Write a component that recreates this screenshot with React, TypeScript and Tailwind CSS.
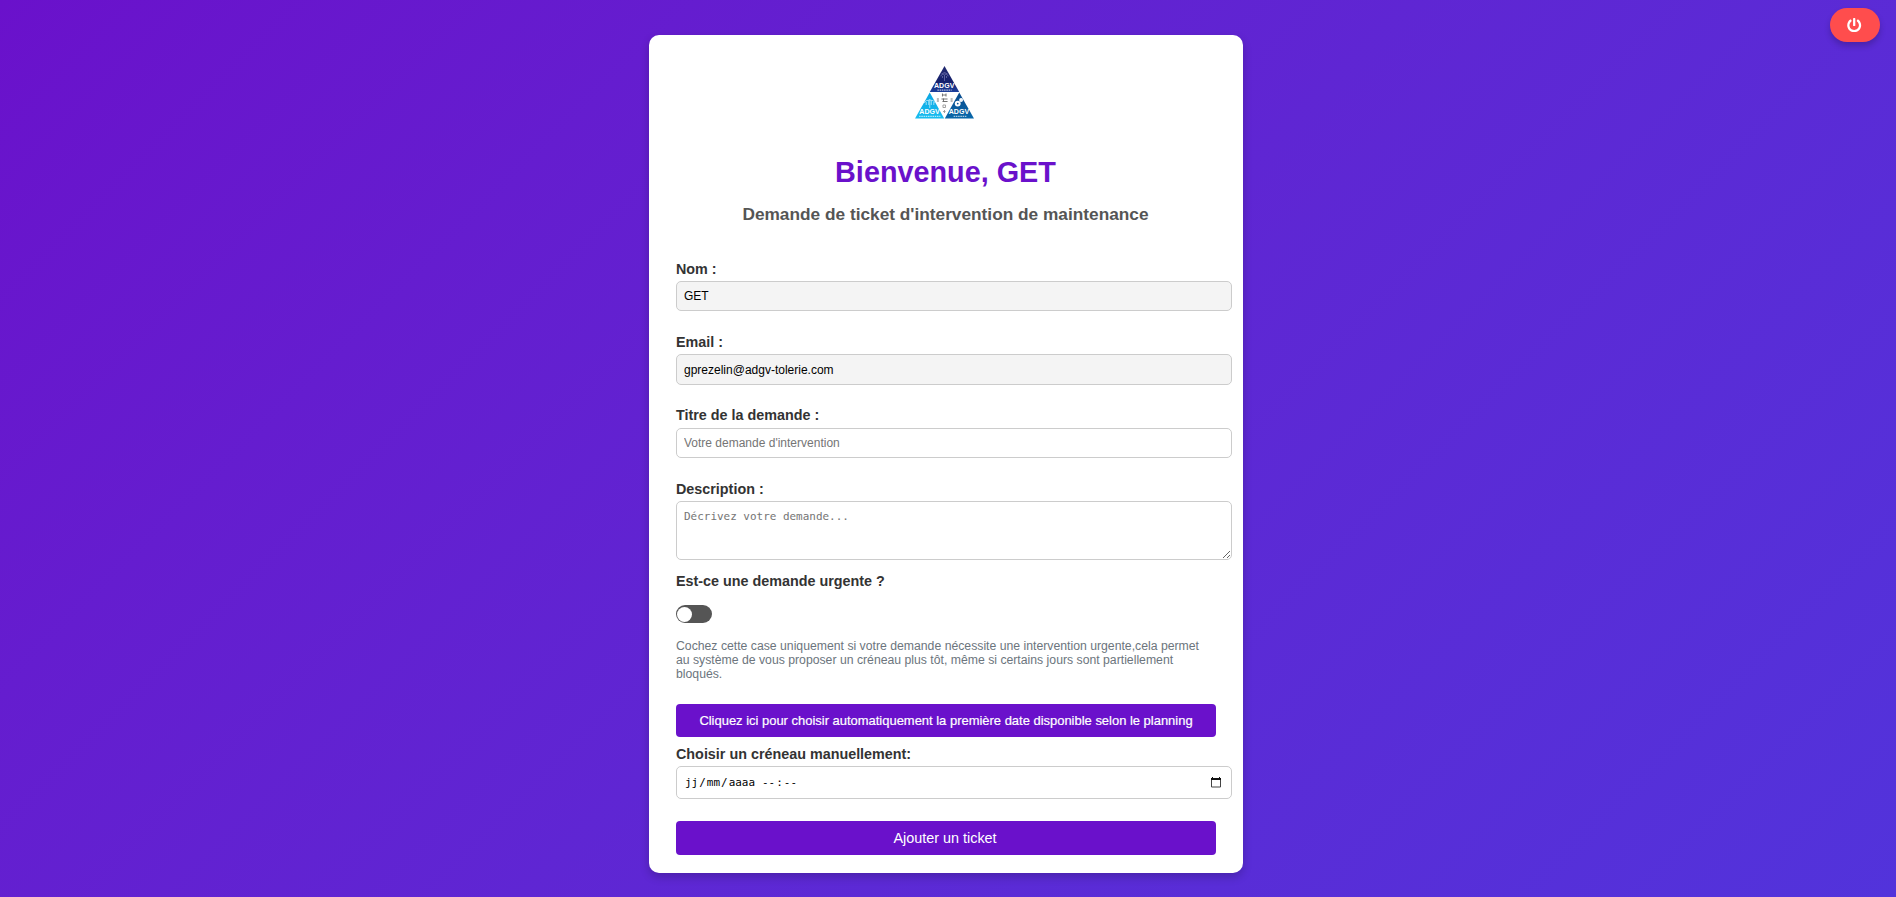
import React from "react";
import { FaPowerOff } from "react-icons/fa";

function Logo() {
  return (
    <svg width="59" height="53" viewBox="0 0 58 53" preserveAspectRatio="none" fontFamily="Liberation Sans, sans-serif" fontWeight="700" textAnchor="middle">
      <defs>
        <linearGradient id="navy" x1="0" y1="0" x2="0" y2="1">
          <stop offset="0" stopColor="#222a70" />
          <stop offset=".6" stopColor="#15206c" />
          <stop offset="1" stopColor="#1c3f9c" />
        </linearGradient>
        <linearGradient id="sky" x1="0" y1="0" x2="0" y2="1">
          <stop offset="0" stopColor="#0aa5e2" />
          <stop offset="1" stopColor="#19bdf0" />
        </linearGradient>
        <linearGradient id="blue" x1="0" y1="0" x2="0" y2="1">
          <stop offset="0" stopColor="#0a4a8c" />
          <stop offset="1" stopColor="#0968aa" />
        </linearGradient>
      </defs>
      <path d="M29 0 43.5 26h-29z" fill="url(#navy)" />
      <path d="M14.5 26.5 28.7 52.4H0z" fill="url(#sky)" />
      <path d="M43.5 26.5 58 52.4H29.3z" fill="url(#blue)" />
      <path d="M26 8q3-3 6 0M25 10q4-4 8 0M27 10v2M31 10v2M29 9v6" stroke="#6c70ad" strokeWidth=".8" fill="none" />
      <path d="M9 37q1-3 5.500-3t5.500 3M11 36v3M13.500 34v5M16 34v5M18.500 36v3M14.500 33v9" stroke="#a9e4fa" strokeWidth=".9" fill="none" />
      <circle cx="42" cy="37.6" r="1.9" stroke="#fff" strokeWidth="2" fill="none" />
      <circle cx="45.3" cy="34" r="1.1" stroke="#fff" strokeWidth="1.6" fill="none" />
      <g fill="#fff" fontSize="6.5">
        <text x="28.7" y="22" textLength="20" lengthAdjust="spacingAndGlyphs">ADGV</text>
        <text x="14.3" y="48.4" textLength="20" lengthAdjust="spacingAndGlyphs">ADGV</text>
        <text x="43.2" y="48.4" textLength="20" lengthAdjust="spacingAndGlyphs">ADGV</text>
      </g>
      <path d="M22 24.2h14M4 50.4h21M38 50.4h13" stroke="#fff" strokeOpacity=".65" strokeWidth="1.3" strokeDasharray="1.5 .7" />
      <g stroke="#666" strokeWidth=".9" fill="none">
        <path d="M27 27.5v3M27 29h3.500M30.500 27.500v3M21.500 33h2M21.500 35h2M26 33h6M27 35.500h5M28 32.500v3M35 33h2M35 35h2" />
        <path d="M27.500 39h2.500v2.500h-2.500zM27.500 45.500h2.500M29 44v3" stroke="#999" />
      </g>
    </svg>
  );
}

function Label({ children, className }: { children: React.ReactNode; className: string }) {
  return <div className={`text-[14.35px] leading-4 font-bold text-[#333] ${className}`}>{children}</div>;
}

const field = "block w-[556px] rounded-[5px] border border-[#ccc] px-[7px] text-xs outline-none";

export default function App() {
  return (
    <div className="relative flex h-[897px] justify-center overflow-hidden bg-linear-135 from-[#6a11cb] to-[#5233db] pt-[35px] pr-1 font-['Liberation_Sans',Arial,sans-serif]">
      <button className="absolute top-2 right-4 flex h-[34px] w-[50px] items-center justify-center rounded-full bg-[#ff4d4d] pr-px text-white shadow-[0_4px_6px_rgba(0,0,0,0.2)]">
        <FaPowerOff size={14.4} />
      </button>
      <main className="h-[838px] w-[594px] rounded-[10px] bg-white px-[27px] pt-[31px] shadow-[0_4px_10px_rgba(0,0,0,0.2)]">
        <div className="flex h-[53px] justify-center pr-[3px]">
          <Logo />
        </div>
        <h1 className="mt-[37px] pr-px text-center text-[28.8px] leading-8 font-bold text-[#6a11cb]">Bienvenue, GET</h1>
        <h2 className="mt-4 pr-px text-center text-[17.28px] leading-5 font-bold text-[#555]">Demande de ticket d'intervention de maintenance</h2>
        <form className="mt-[37px]" onSubmit={(e) => e.preventDefault()}>
          <Label className="">Nom :</Label>
          <input className={`${field} mt-1 h-[30px] bg-[#f4f4f4] text-black`} readOnly value="GET" />
          <Label className="mt-[23px]">Email :</Label>
          <input className={`${field} mt-1 h-[31px] bg-[#f4f4f4] text-black`} readOnly value="gprezelin@adgv-tolerie.com" />
          <Label className="mt-[22px]">Titre de la demande :</Label>
          <input className={`${field} mt-[5px] h-[30px] placeholder:text-[#757575]`} placeholder="Votre demande d'intervention" />
          <Label className="mt-[23px]">Description :</Label>
          <textarea
            className={`${field} mt-1 h-[59px] resize pt-2 font-['DejaVu_Sans_Mono',monospace] text-[10.96px] leading-[14px] placeholder:text-[#757575]`}
            placeholder="Décrivez votre demande..."
          />
          <Label className="mt-[13px]">Est-ce une demande urgente ?</Label>
          <div className="mt-4 flex h-[18px] w-9 items-center rounded-full bg-[#555] pl-px">
            <div className="size-[15px] rounded-full bg-white" />
          </div>
          <p className="mt-4 text-[12.24px] leading-[14px] whitespace-nowrap text-[#6c757d]">
            Cochez cette case uniquement si votre demande nécessite une intervention urgente,cela permet
            <br />
            au système de vous proposer un créneau plus tôt, même si certains jours sont partiellement
            <br />
            bloqués.
          </p>
          <button className="mt-[23px] block h-[33px] w-full rounded-[4px] bg-[#6a11cb] text-[12.96px] text-white [-webkit-text-stroke:0.2px_white]">
            Cliquez ici pour choisir automatiquement la première date disponible selon le planning
          </button>
          <Label className="mt-[9px]">Choisir un créneau manuellement:</Label>
          <div className={`${field} mt-1 flex! h-[33px] items-center justify-between font-['DejaVu_Sans_Mono',monospace] text-[10.96px] text-black`}>
            <div className="flex pt-0.5 pl-px">
              <span className="pr-px">jj</span>/<span className="px-px">mm</span>/<span className="px-px">aaaa</span>
              <span className="ml-[5px] px-px">--</span>:<span className="px-px">--</span>
            </div>
            <svg width="10" height="11" viewBox="0 0 10 11" className="mr-[3px]">
              <path d="M.5 2v8h9V2" fill="none" stroke="#444" strokeWidth="1" />
              <path d="M0 1h10v2H0zM1 0h1v1H1zM8 0h1v1H8z" fill="#111" />
            </svg>
          </div>
          <button className="mt-[22px] block h-[34px] w-full rounded-[4px] bg-[#6a11cb] pt-px pr-0.5 text-[14.4px] text-white">Ajouter un ticket</button>
        </form>
      </main>
    </div>
  );
}
